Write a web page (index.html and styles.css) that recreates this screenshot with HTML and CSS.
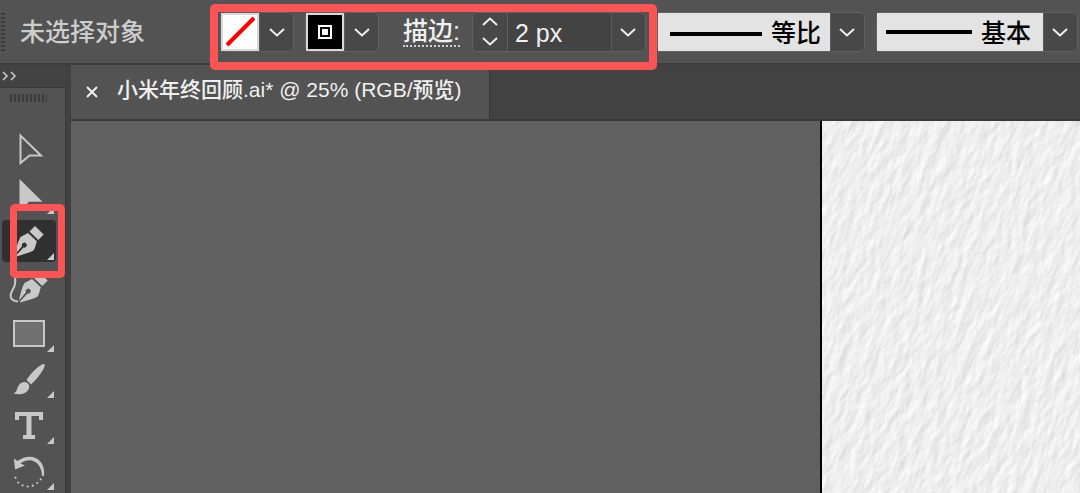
FILE: index.html
```html
<!DOCTYPE html>
<html lang="zh-CN">
<head>
<meta charset="utf-8">
<meta name="viewport" content="width=device-width, initial-scale=1">
<title>小米年终回顾.ai</title>
<link rel="stylesheet" href="styles.css">
</head>
<body>
<svg class="defs" aria-hidden="true">
  <defs>
    <symbol id="chevron" viewBox="0 0 16 10"><path d="M1 2 8 8.500 15 2" fill="none" stroke="currentColor" stroke-width="2"/></symbol>
    <symbol id="corner" viewBox="0 0 7 7"><path d="M7 0V7H0Z" fill="currentColor"/></symbol>
    <symbol id="nib" viewBox="0 0 54 42">
      <path d="M33 6 41.700 14.500 36.300 20 27.500 11.500Z"/>
      <path fill-rule="evenodd" d="M26 13 34.800 21.300C33.500 25 33.500 28 31.500 30.500 27.500 33 20 34.500 14.500 36.500L13.800 35.800 21.500 27.500A2.500 2.500 0 1 0 20 26.200L13 34.500C14.500 28 15.500 22 18.500 17Z"/>
    </symbol>
    <filter id="grain" x="0" y="0" width="100%" height="100%" color-interpolation-filters="sRGB">
      <feTurbulence type="fractalNoise" baseFrequency="0.11 0.05" numOctaves="5" seed="8" result="n"/>
      <feDiffuseLighting in="n" surfaceScale="0.450" diffuseConstant="1.160" lighting-color="#f2f2f2">
        <feDistantLight azimuth="200" elevation="58"/>
      </feDiffuseLighting>
    </filter>
  </defs>
</svg>

<header class="options">
  <span class="options-grip"></span>
  <span class="selection-state">未选择对象</span>
  <div class="stroke-group">
    <div class="combo">
      <button class="swatch swatch-none" type="button" aria-label="填色">
        <svg viewBox="0 0 34 34"><path d="M4 30 31 3" stroke="#f00" stroke-width="4"/></svg>
      </button>
      <button class="drop" type="button" aria-label="填色选项"><svg class="chevron"><use href="#chevron"/></svg></button>
    </div>
    <div class="combo">
      <button class="swatch swatch-black" type="button" aria-label="描边颜色">
        <svg viewBox="0 0 34 34"><path d="M11 11H23V23H11Z" fill="none" stroke="#fff" stroke-width="2"/><path d="M14 14H20V20H14Z" fill="#fff"/></svg>
      </button>
      <button class="drop" type="button" aria-label="描边颜色选项"><svg class="chevron"><use href="#chevron"/></svg></button>
    </div>
    <label class="stroke-label" for="weight">描边:</label>
    <div class="combo">
      <span class="stepper">
        <button type="button" aria-label="增大"><svg class="chevron up"><use href="#chevron"/></svg></button>
        <button type="button" aria-label="减小"><svg class="chevron"><use href="#chevron"/></svg></button>
      </span>
      <input class="weight" id="weight" type="text" value="2 px">
      <button class="drop" type="button" aria-label="描边粗细选项"><svg class="chevron"><use href="#chevron"/></svg></button>
    </div>
    <span class="callout callout-stroke"></span>
  </div>
  <div class="combo">
    <label class="preview preview-profile"><span class="rule rule-profile"></span>
      <select aria-label="变量宽度配置文件"><option>等比</option></select></label>
    <button class="drop" type="button" aria-label="配置文件选项"><svg class="chevron"><use href="#chevron"/></svg></button>
  </div>
  <div class="combo">
    <label class="preview preview-brush"><span class="rule rule-brush"></span>
      <select aria-label="画笔定义"><option>基本</option></select></label>
    <button class="drop" type="button" aria-label="画笔选项"><svg class="chevron"><use href="#chevron"/></svg></button>
  </div>
</header>

<div class="workspace">
  <aside class="toolbox">
    <button class="collapse" type="button" aria-label="展开面板"><svg viewBox="0 0 14 10"><path d="M1 1 5 5 1 9M9 1 13 5 9 9" fill="none" stroke="currentColor" stroke-width="1.500"/></svg></button>
    <span class="toolbox-grip"></span>
    <div class="tools">
      <button class="tool" type="button" aria-label="选择"><svg viewBox="0 0 54 42"><path d="M18.500 7.500V35L27.500 27.500H39Z" fill="none" stroke="currentColor" stroke-width="2"/></svg></button>
      <button class="tool" type="button" aria-label="直接选择"><svg viewBox="0 0 54 42"><path d="M17.500 5V37L27 27.800H40.500Z"/><use href="#corner" x="45" y="33" width="7" height="7"/></svg></button>
      <button class="tool active" type="button" aria-label="钢笔"><svg viewBox="0 0 54 42"><use href="#nib" width="54" height="42"/><use href="#corner" x="45" y="33" width="7" height="7"/></svg><span class="callout callout-tool"></span></button>
      <button class="tool" type="button" aria-label="曲率"><svg viewBox="0 0 54 42"><use href="#nib" x="4" width="54" height="42"/><path d="M13 9C14 20 12 21 10 25 7 31 9 35 16 35.500" fill="none" stroke="currentColor" stroke-width="2"/></svg></button>
      <button class="tool" type="button" aria-label="矩形"><svg viewBox="0 0 54 42"><path d="M12 9H42V34H12Z" fill="#707070" stroke="currentColor" stroke-width="2"/><use href="#corner" x="45" y="33" width="7" height="7"/></svg></button>
      <button class="tool" type="button" aria-label="画笔"><svg viewBox="0 0 54 42"><path d="M41 6C43.500 5.500 43 8 41.500 11 38 17 34 22 29 26.500L24.500 22C29 15 35 9 41 6ZM22 24C25 23.500 28 26.500 27 30 25.500 36 17 37.500 11.500 35.500 16.500 34 14 25 22 24Z"/><use href="#corner" x="45" y="33" width="7" height="7"/></svg></button>
      <button class="tool" type="button" aria-label="文字"><svg viewBox="0 0 54 42"><path d="M13 8H41V16H37V12H29.500V31H33V35H21V31H24.500V12H17V16H13Z"/><use href="#corner" x="45" y="33" width="7" height="7"/></svg></button>
      <button class="tool" type="button" aria-label="旋转"><svg viewBox="0 0 54 42"><path d="M12 8.500 13 19.500 23 15.500 18.500 13.500C29 5.500 40 13 40 26L42 26C44 8 28 1.500 15.500 11Z"/><g><circle cx="13.500" cy="27.700" r="1.100"/><circle cx="16.200" cy="32.500" r="1.100"/><circle cx="20.500" cy="35.300" r="1.100"/><circle cx="25.700" cy="36.500" r="1.100"/><circle cx="30.800" cy="35.700" r="1.100"/><circle cx="35.300" cy="33" r="1.100"/><circle cx="38.700" cy="29.300" r="1.100"/></g><use href="#corner" x="45" y="33" width="7" height="7"/></svg></button>
    </div>
  </aside>
  <main class="document">
    <div class="tabs">
      <div class="tab">
        <button class="close" type="button" aria-label="关闭"><svg viewBox="0 0 12 12"><path d="M1 1 11 11M11 1 1 11" stroke="currentColor" stroke-width="2"/></svg></button>
        <span>小米年终回顾.ai* @ 25% (RGB/预览)</span>
      </div>
    </div>
    <div class="canvas">
      <div class="artboard"><svg class="paper" aria-hidden="true"><g transform="rotate(22)"><rect x="-100" y="-800" width="3000" height="3000" filter="url(#grain)"/></g></svg></div>
    </div>
  </main>
</div>
</body>
</html>
```
FILE: styles.css
```css
* {
  box-sizing: border-box;
}

body {
  margin: 0;
  height: 100vh;
  display: flex;
  flex-direction: column;
  overflow: hidden;
  background: #535353;
  color: #f0f0f0;
  font-family: "Liberation Sans", "Noto Sans CJK SC", sans-serif;
  font-size: 25px;
  font-weight: 500;
}

button,
input,
select {
  margin: 0;
  padding: 0;
  border: 0;
  border-radius: 0;
  background: none;
  color: inherit;
  font: inherit;
}

svg {
  display: block;
}

.defs {
  position: absolute;
  width: 0;
  height: 0;
}

/* Options bar */

.options {
  flex: none;
  display: flex;
  align-items: center;
  gap: 11px;
  height: 65px;
  border-bottom: 2px solid #3e3e3e;
  white-space: nowrap;
}

.options > * {
  flex: none;
}

.options-grip {
  width: 4px;
  height: 38px;
  margin-left: 1px;
  background: repeating-linear-gradient(#3c3c3c 0 2px, #535353 2px 4px);
}

.selection-state {
  width: 189px;
  padding: 0 0 4px 4px;
  color: #cdcdcd;
}

.stroke-group {
  position: relative;
  display: flex;
  align-items: center;
  gap: 11px;
  margin-left: 4px;
}

.combo {
  display: flex;
  height: 40px;
  border: 1px solid #626262;
  border-radius: 5px;
  background: #484848;
}

.swatch {
  width: 38px;
  height: 38px;
  border: 2px solid #d8d8d8;
}

.swatch-none {
  background: #fff;
}

.swatch-black {
  background: #000;
}

.drop {
  display: grid;
  place-items: center;
  width: 34px;
  border-left: 1px solid #5c5c5c;
}

.chevron {
  width: 16px;
  height: 10px;
}

.up {
  transform: rotate(180deg);
}

.stroke-label {
  margin: 0 1px 0 13px;
  line-height: 28px;
  border-bottom: 2px dotted #d0d0d0;
}

.stepper {
  display: grid;
  width: 35px;
  border-right: 1px solid #626262;
}

.stepper button {
  display: grid;
  place-items: center;
}

.weight {
  width: 103px;
  padding: 4px 0 0 7px;
  background: #434343;
}

.preview {
  display: flex;
  align-items: center;
  gap: 9px;
  background: #e3e3e3;
  color: #000;
}

.preview-profile {
  width: 172px;
  padding-left: 12px;
}

.preview-brush {
  width: 166px;
  padding-left: 9px;
}

.preview select {
  appearance: none;
  width: 54px;
  height: 38px;
  padding-top: 2px;
}

.rule {
  height: 4px;
  background: #000;
}

.rule-profile {
  width: 92px;
  margin-top: 4px;
}

.rule-brush {
  width: 86px;
}

/* Workspace */

.workspace {
  flex: 1;
  display: flex;
  min-height: 0;
}

.toolbox {
  flex: none;
  display: flex;
  flex-direction: column;
  width: 71px;
  border-right: 5px solid #414141;
  box-shadow: inset -1px 0 #393939;
}

.collapse {
  flex: none;
  width: 66px;
  height: 23px;
  padding-left: 2px;
  border-bottom: 1px solid #393939;
  background: #434343;
  color: #d0d0d0;
}

.collapse svg {
  width: 14px;
  height: 10px;
}

.toolbox-grip {
  flex: none;
  width: 37px;
  height: 8px;
  margin: 6px 0 0 10px;
  background: repeating-linear-gradient(90deg, #3c3c3c 0 2px, #535353 2px 4px);
}

.tools {
  display: flex;
  flex-direction: column;
  gap: 4px;
  padding: 26px 0 0 2px;
}

.tool {
  position: relative;
  flex: none;
  width: 54px;
  height: 42px;
  border-radius: 4px;
  color: #c8c8c8;
}

.tool svg {
  width: 54px;
  height: 42px;
  fill: currentColor;
}

.active {
  z-index: 1;
  background: #303030;
}

.document {
  flex: 1;
  display: flex;
  flex-direction: column;
  min-width: 0;
}

.tabs {
  flex: none;
  display: flex;
  height: 56px;
  border-bottom: 2px solid #393939;
  background: #424242;
}

.tab {
  display: flex;
  align-items: center;
  gap: 19px;
  padding: 0 27px 9px 15px;
  border-right: 1px solid #393939;
  background: #535353;
  font-size: 21px;
  white-space: nowrap;
}

.close {
  margin-top: 9px;
}

.close svg {
  width: 12px;
  height: 12px;
}

.canvas {
  flex: 1;
  display: flex;
  min-height: 0;
  padding-left: 749px;
  background: #606060;
}

.artboard {
  flex: 1;
  min-width: 0;
  border-left: 2px solid #000;
  background: #efefef;
}

.paper {
  width: 100%;
  height: 100%;
}

/* Highlight frames over the interface */

.callout {
  position: absolute;
  border: 8px solid #fc5454;
  border-radius: 5px;
  pointer-events: none;
}

.callout-stroke {
  inset: -8px -11px -18px -10px;
}

.callout-tool {
  inset: -16px -9px -16px 8px;
  border-width: 7px;
}
```
